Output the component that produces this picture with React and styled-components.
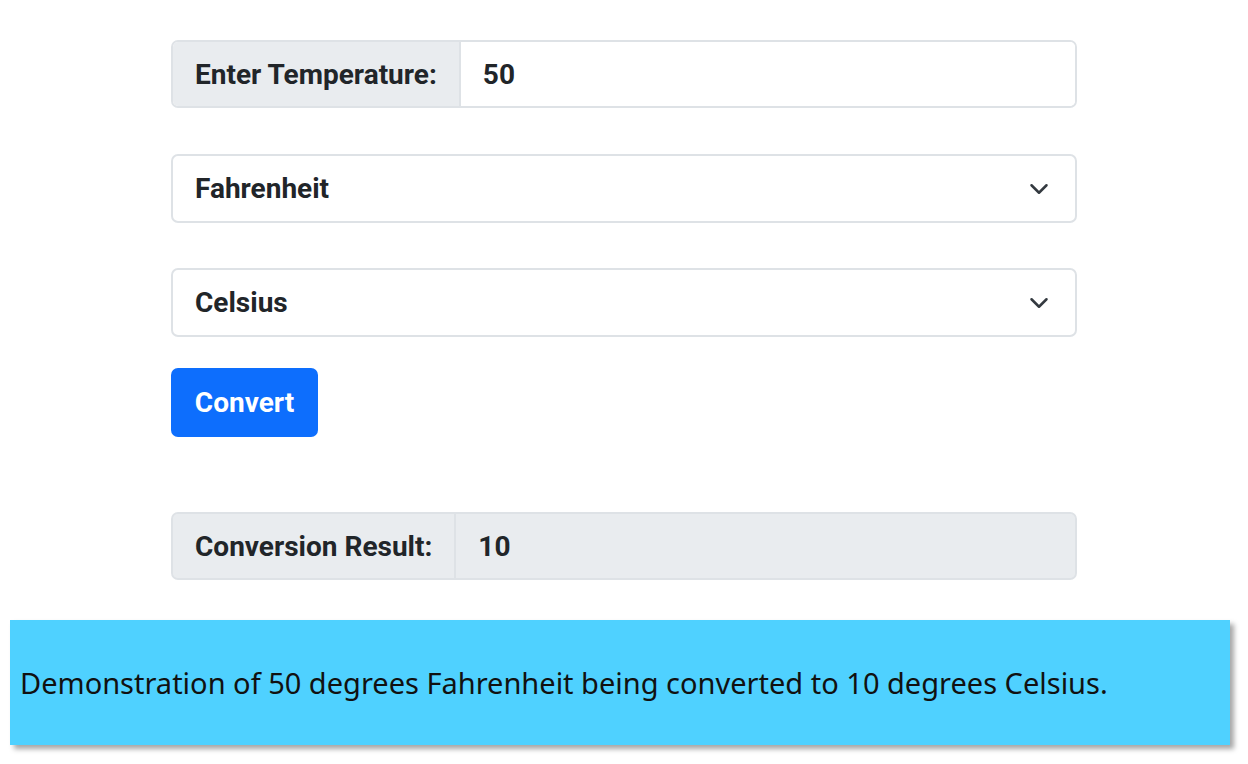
import styled, { createGlobalStyle } from "styled-components";

const GlobalStyle = createGlobalStyle`
  body {
    margin: 0;
    background: #ffffff;
    font-family: "Roboto", "Liberation Sans", sans-serif;
  }
`;

const Chevron = () => (
  <svg width="20" height="20" viewBox="0 0 16 16" fill="none">
    <path d="M2 5l6 6 6-6" stroke="#343a40" strokeWidth="2" strokeLinecap="round" strokeLinejoin="round" />
  </svg>
);

const App = () => {
  return (
    <>
      <GlobalStyle />
      <Page>
        <Form>
          <Group>
            <Addon>Enter Temperature:</Addon>
            <Field>50</Field>
          </Group>
          <Select>
            Fahrenheit
            <Chevron />
          </Select>
          <Select>
            Celsius
            <Chevron />
          </Select>
          <Button>Convert</Button>
          <Group $readonly>
            <Addon>Conversion Result:</Addon>
            <Field $readonly>10</Field>
          </Group>
        </Form>
        <Caption>
          Demonstration of 50 degrees Fahrenheit being converted to 10 degrees Celsius.
        </Caption>
      </Page>
    </>
  );
};

export default App;

const Page = styled.div`
  padding: 40px 0 19px 10px;
`;

const Form = styled.div`
  width: 906px;
  margin-left: 161px;
  display: flex;
  flex-direction: column;
  align-items: flex-start;
  color: #212529;
  font-weight: 700;
  font-size: 28px;
`;

const Group = styled.div`
  width: 100%;
  height: 68px;
  box-sizing: border-box;
  display: flex;
  border: 2px solid #dee2e6;
  border-radius: 7px;
  overflow: hidden;
  background: ${(p) => (p.$readonly ? "#e9ecef" : "#ffffff")};
  margin-bottom: ${(p) => (p.$readonly ? "40px" : "46px")};
`;

const Addon = styled.div`
  display: flex;
  align-items: center;
  padding: 0 22px;
  background: #e9ecef;
  border-right: 2px solid #dee2e6;
  white-space: nowrap;
`;

const Field = styled.div`
  flex: 1;
  display: flex;
  align-items: center;
  padding: 0 22px;
  background: ${(p) => (p.$readonly ? "#e9ecef" : "#ffffff")};
`;

const Select = styled.div`
  width: 100%;
  height: 69px;
  box-sizing: border-box;
  display: flex;
  align-items: center;
  justify-content: space-between;
  padding: 0 26px 0 22px;
  border: 2px solid #dee2e6;
  border-radius: 7px;
  background: #ffffff;
  margin-bottom: 45px;

  &:nth-of-type(3) {
    margin-bottom: 31px;
  }
`;

const Button = styled.button`
  height: 69px;
  width: 147px;
  border: none;
  border-radius: 7px;
  background: #0d6efd;
  color: #ffffff;
  font-family: inherit;
  font-weight: 700;
  font-size: 28px;
  margin-bottom: 75px;
`;

const Caption = styled.div`
  width: 1220px;
  height: 125px;
  box-sizing: border-box;
  display: flex;
  align-items: center;
  padding-left: 10px;
  background: #4fd1ff;
  box-shadow: 4px 4px 5px rgba(0, 0, 0, 0.35);
  font-family: "Noto Sans", "Open Sans", sans-serif;
  font-size: 29px;
  color: #111111;
`;
